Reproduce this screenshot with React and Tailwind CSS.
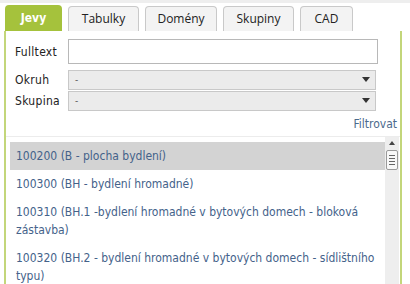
import React from "react";

const tabs = ["Tabulky", "Domény", "Skupiny", "CAD"];
const tabWidths = ["w-[71px]", "w-[72px]", "w-[71px]", "w-[53px]"];

const items = [
  { text: "100200 (B - plocha bydlení)", active: true },
  { text: "100300 (BH - bydlení hromadné)" },
  { text: "100310 (BH.1 -bydlení hromadné v bytových domech - bloková zástavba)" },
  { text: "100320 (BH.2 - bydlení hromadné v bytových domech - sídlištního typu)" },
];

const Select = () => (
  <div className="flex items-center h-[20px] w-[308px] bg-[#ebebeb] border border-[#c8c8c8] pl-[6px] pr-[5px] text-[10px] text-[#666]">
    <span className="flex-1">-</span>
    <span className="w-0 h-0 border-l-[4px] border-r-[4px] border-t-[5px] border-l-transparent border-r-transparent border-t-[#333]" />
  </div>
);

export default function App() {
  return (
    <div
      className="w-[410px] h-[284px] bg-white overflow-hidden"
      style={{ fontFamily: '"DejaVu Sans Condensed", "DejaVu Sans", sans-serif' }}
    >
      <div className="h-[3px] bg-[#eeeeee]" />
      <div className="flex items-end gap-[6px] pl-[5px] pt-[2px]">
        <div className="w-[57px] h-[26px] bg-[#a5c23c] rounded-t-[4px] flex items-center justify-center text-white font-bold text-[12px]">
          Jevy
        </div>
        {tabs.map((t, i) => (
          <div
            key={t}
            className={`${tabWidths[i]} h-[25px] bg-[#f3f3f3] border border-b-0 border-[#c9c9c9] rounded-t-[4px] flex items-center justify-center text-[12px] text-[#222]`}
            style={{ fontFamily: '"Open Sans", "DejaVu Sans", sans-serif' }}
          >
            {t}
          </div>
        ))}
      </div>
      <div className="ml-[4px] w-[398px] h-[256px] border-l-2 border-r-2 border-[#c3d67a] flex flex-col">
        <div className="pl-[9px] pt-[8px] text-[12px] text-[#222]">
          <div className="flex items-center h-[25px]">
            <span className="w-[53px] tracking-[0.3px]">Fulltext</span>
            <div className="w-[310px] h-[25px] border border-[#b8b8b8] bg-white" />
          </div>
          <div className="flex items-center mt-[5px] h-[21px]">
            <span className="w-[53px] tracking-[0.3px]">Okruh</span>
            <Select />
          </div>
          <div className="flex items-center h-[21px]">
            <span className="w-[53px] tracking-[0.3px]">Skupina</span>
            <Select />
          </div>
        </div>
        <div className="text-right pr-[3px] mt-[4px] text-[12px] text-[#4b6a8c] h-[18px]">Filtrovat</div>
        <div className="border-t border-[#ececec] mt-[3px] flex flex-1 min-h-0">
          <div className="flex-1 pl-[4px] pt-[5px] text-[12px] text-[#44628a]">
            {items.map((it) => (
              <div
                key={it.text}
                className={`px-[6px] leading-[18px] py-[5px] ${it.active ? "bg-[#d3d3d3]" : ""}`}
              >
                {it.text}
              </div>
            ))}
          </div>
          <div className="w-[14px] mr-[1px] bg-[#eeeeee] flex flex-col items-center pt-[4px]">
            <span className="w-0 h-0 border-l-[3px] border-r-[3px] border-b-[4px] border-l-transparent border-r-transparent border-b-[#444]" />
            <div className="mt-[5px] w-[12px] h-[20px] bg-[#f8f8f8] border border-[#9a9a9a] rounded-[2px] flex flex-col items-center justify-center gap-[2px]">
              <span className="w-[6px] h-px bg-[#666]" />
              <span className="w-[6px] h-px bg-[#666]" />
              <span className="w-[6px] h-px bg-[#666]" />
              <span className="w-[6px] h-px bg-[#666]" />
            </div>
          </div>
        </div>
      </div>
    </div>
  );
}
